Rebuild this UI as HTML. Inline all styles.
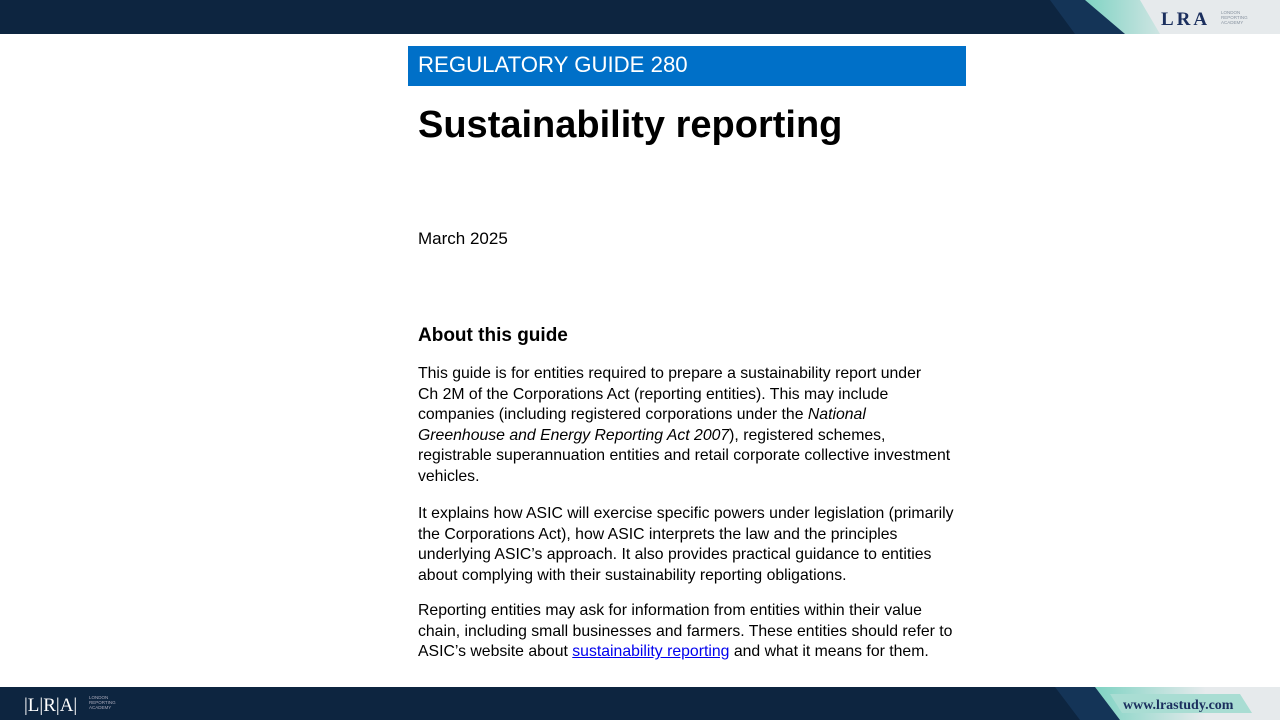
<!DOCTYPE html>
<html><head><meta charset="utf-8"><style>
body{margin:0;width:1280px;height:720px;background:#fff;position:relative;overflow:hidden;font-family:"Liberation Sans",Arial,sans-serif;color:#000}
.abs{position:absolute}
.p{position:absolute;left:418px;font-size:15.8px;line-height:20.6px;width:600px}
</style></head><body>
<svg class="abs" style="left:0;top:0" width="1280" height="34">
<defs><linearGradient id="g1" x1="0" x2="1"><stop offset="0" stop-color="#7fd3c3"/><stop offset="0.5" stop-color="#e6eaec"/></linearGradient></defs>
<rect width="1280" height="34" fill="#0d2540"/>
<polygon points="1050,0 1100,0 1125,34 1075,34" fill="#143457"/>
<polygon points="1085,0 1280,0 1280,34 1125,34" fill="url(#g1)"/>
<polygon points="1140,0 1280,0 1280,34 1160,34" fill="#e6eaec"/>
<text x="1161" y="25" font-family="Liberation Serif" font-size="19" font-weight="bold" fill="#1b2f5e" letter-spacing="3">LRA</text>
<text x="1221" y="14" font-size="4.5" fill="#8893a0">LONDON</text>
<text x="1221" y="19" font-size="4.5" fill="#8893a0">REPORTING</text>
<text x="1221" y="24" font-size="4.5" fill="#8893a0">ACADEMY</text>
</svg>
<div class="abs" style="left:408px;top:46px;width:558px;height:40px;background:#0070c8"></div>
<div class="abs" style="left:418px;top:52px;font-size:22.2px;color:#fff">REGULATORY GUIDE 280</div>
<div class="abs" style="left:418px;top:104px;font-size:38px;font-weight:bold">Sustainability reporting</div>
<div class="abs" style="left:418px;top:229px;font-size:17px">March 2025</div>
<div class="abs" style="left:418px;top:325px;font-size:19px;font-weight:bold">About this guide</div>
<div class="p" style="top:364px">This guide is for entities required to prepare a sustainability report under<br>Ch 2M of the Corporations Act (reporting entities). This may include<br>companies (including registered corporations under the <i>National<br>Greenhouse and Energy Reporting Act 2007</i>), registered schemes,<br>registrable superannuation entities and retail corporate collective investment<br>vehicles.</div>
<div class="p" style="top:504px">It explains how ASIC will exercise specific powers under legislation (primarily<br>the Corporations Act), how ASIC interprets the law and the principles<br>underlying ASIC’s approach. It also provides practical guidance to entities<br>about complying with their sustainability reporting obligations.</div>
<div class="p" style="top:601px">Reporting entities may ask for information from entities within their value<br>chain, including small businesses and farmers. These entities should refer to<br>ASIC’s website about <span style="color:#00e;text-decoration:underline">sustainability reporting</span> and what it means for them.</div>
<svg class="abs" style="left:0;top:687px" width="1280" height="33">
<defs><linearGradient id="g2" x1="0" x2="1"><stop offset="0" stop-color="#7fd3c3"/><stop offset="0.6" stop-color="#e6eaec"/></linearGradient></defs>
<rect width="1280" height="33" fill="#0d2540"/>
<polygon points="1055,0 1095,0 1120,33 1080,33" fill="#143457"/>
<polygon points="1095,0 1280,0 1280,33 1120,33" fill="url(#g2)"/>
<polygon points="1110,7 1240,7 1252,26 1122,26" fill="#a9ddd3"/>
<text x="1123" y="22" font-family="Liberation Serif" font-size="14" font-weight="bold" fill="#1b2f5e">www.lrastudy.com</text>
<text x="24" y="24" font-family="Liberation Serif" font-size="19" fill="#fff">|L|R|A|</text>
<text x="89" y="12" font-size="4.5" fill="#aab">LONDON</text>
<text x="89" y="17" font-size="4.5" fill="#aab">REPORTING</text>
<text x="89" y="22" font-size="4.5" fill="#aab">ACADEMY</text>
</svg>
</body></html>
